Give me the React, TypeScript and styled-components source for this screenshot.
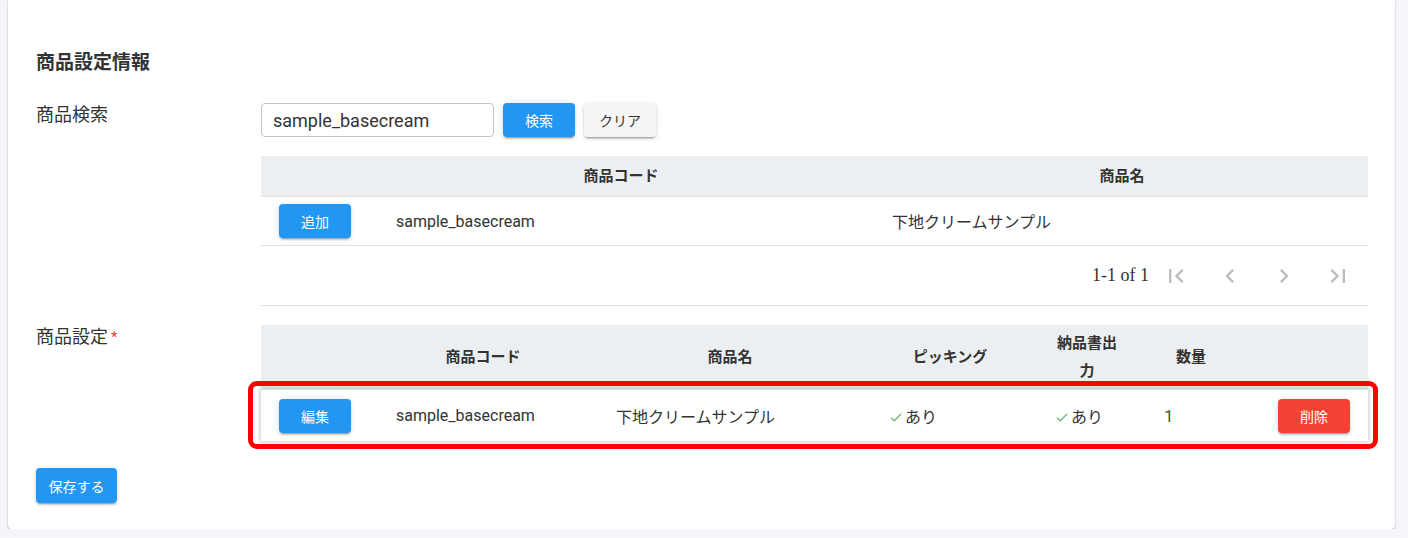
import React from 'react';
import styled, { createGlobalStyle } from 'styled-components';

const GlobalStyle = createGlobalStyle`
  *, *::before, *::after {
    box-sizing: border-box;
  }
  body {
    margin: 0;
    background: #f4f6f9;
    font-family: Roboto, "Noto Sans CJK JP", sans-serif;
    color: #333;
  }
`;

const Page = styled.div`
  padding: 0 13px 0 8px;
`;

const Card = styled.div`
  background: #fff;
  border-radius: 0 0 4px 4px;
  box-shadow: 0 1px 2px rgba(0, 0, 0, 0.28), 0 0 1px rgba(0, 0, 0, 0.12);
  padding: 50px 27px 26px 28px;
`;

const Title = styled.h2`
  margin: 0 0 27px;
  font-size: 19px;
  line-height: 26px;
  font-weight: 700;
  color: #333;
`;

const FieldRow = styled.div`
  display: flex;
  margin-bottom: 19px;
`;

const Label = styled.div`
  width: 225px;
  flex: none;
  font-size: 18px;
  line-height: 24px;
  color: #333;
`;

const Required = styled.span`
  color: #e53935;
  font-size: 15px;
  margin-left: 3px;
  vertical-align: top;
`;

const FieldBody = styled.div`
  flex: 1;
  display: flex;
  flex-direction: column;
  gap: 19px;
`;

const SearchBar = styled.div`
  display: flex;
  gap: 9px;
`;

const SearchInput = styled.input`
  width: 233px;
  height: 34px;
  border: 1px solid #c4c4c4;
  border-radius: 4px;
  padding: 0 11px;
  font-family: Roboto, "Noto Sans CJK JP", sans-serif;
  font-size: 18px;
  color: #333;
  outline: none;
`;

type Tone = 'primary' | 'error' | 'plain';

const toneBg: Record<Tone, string> = {
  primary: '#2196f3',
  error: '#f44336',
  plain: '#f5f5f5',
};

const Button = styled.button<{ $tone?: Tone }>`
  height: 34px;
  min-width: 72px;
  padding: 0 12px;
  border: none;
  border-radius: 4px;
  background: ${(p) => toneBg[p.$tone ?? 'primary']};
  color: ${(p) => (p.$tone === 'plain' ? '#333' : '#fff')};
  font-family: Roboto, "Noto Sans CJK JP", sans-serif;
  font-size: 14px;
  cursor: pointer;
  box-shadow: 0 3px 1px -2px rgba(0, 0, 0, 0.2), 0 2px 2px 0 rgba(0, 0, 0, 0.14),
    0 1px 5px 0 rgba(0, 0, 0, 0.12);
`;

const SaveButton = styled(Button)`
  height: 35px;
  min-width: 81px;
  margin-top: 8px;
`;

const Table = styled.div``;

const Grid = styled.div<{ $cols: string }>`
  display: grid;
  grid-template-columns: ${(p) => p.$cols};
  align-items: center;
`;

const HeadRow = styled(Grid)<{ $h: number }>`
  background: #eceff1;
  min-height: ${(p) => p.$h}px;
`;

const HeadCell = styled.div<{ $shift?: boolean }>`
  padding: ${(p) => (p.$shift ? '0 30px 0 16px' : '0 16px')};
  text-align: center;
  font-size: 15px;
  font-weight: 700;
  line-height: 28px;
  color: #333;
`;

const BodyRow = styled(Grid)<{ $h: number; $raised?: boolean }>`
  position: relative;
  height: ${(p) => p.$h}px;
  border-top: 1px solid #e0e0e0;
  background: #fff;
  box-shadow: ${(p) => (p.$raised ? '0 0 4px 1px rgba(0, 0, 0, 0.22)' : 'none')};
`;

const Cell = styled.div<{ $pl?: number; $align?: 'left' | 'right' }>`
  padding: 0 18px 0 ${(p) => p.$pl ?? 16}px;
  text-align: ${(p) => p.$align ?? 'left'};
  font-size: 16px;
  color: #333;
  white-space: nowrap;
`;

const Qty = styled.span`
  font-size: 17px;
  color: #33691e;
`;

const Highlight = styled.div`
  position: absolute;
  left: -13px;
  right: -10px;
  top: -9px;
  bottom: -8px;
  border: 5px solid #f00;
  border-radius: 9px;
  pointer-events: none;
`;

const Footer = styled.div`
  height: 61px;
  display: flex;
  align-items: center;
  justify-content: flex-end;
  padding-right: 3px;
  border-top: 1px solid #e0e0e0;
  border-bottom: 1px solid #e0e0e0;
`;

const PageInfo = styled.span`
  font-family: "Liberation Serif", serif;
  font-size: 18px;
  color: #333;
`;

const PageButton = styled.span`
  width: 36px;
  height: 36px;
  margin: 0 9px;
  display: inline-flex;
  align-items: center;
  justify-content: center;
  color: #bdbdbd;
`;

const Check = styled.svg`
  width: 12px;
  height: 9px;
  margin-right: 3px;
  vertical-align: 1px;
`;

const pagePaths = [
  'M18.41,16.59L13.82,12L18.41,7.41L17,6L11,12L17,18L18.41,16.59M6,6H8V18H6V6Z',
  'M15.41,16.58L10.83,12L15.41,7.41L14,6L8,12L14,18L15.41,16.58Z',
  'M8.59,16.58L13.17,12L8.59,7.41L10,6L16,12L10,18L8.59,16.58Z',
  'M5.59,7.41L10.18,12L5.59,16.59L7,18L13,12L7,6L5.59,7.41M16,6H18V18H16V6Z',
];

const CheckMark = () => (
  <Check viewBox="0 0 12 9">
    <path d="M1 4.6 L4.2 7.8 L11 1" fill="none" stroke="#66bb6a" strokeWidth="1.3" />
  </Check>
);

const Yes = () => (
  <>
    <CheckMark />
    あり
  </>
);

const searchCols = '119px 496px 1fr';
const settingCols = '119px 220px 274px 166px 108px 100px 1fr';

const App: React.FC = () => {
  return (
    <Page>
      <GlobalStyle />
      <Card>
        <Title>商品設定情報</Title>

        <FieldRow>
          <Label>商品検索</Label>
          <FieldBody>
            <SearchBar>
              <SearchInput defaultValue="sample_basecream" />
              <Button>検索</Button>
              <Button $tone="plain">クリア</Button>
            </SearchBar>
            <Table>
              <HeadRow $cols={searchCols} $h={40}>
                <HeadCell />
                <HeadCell $shift>商品コード</HeadCell>
                <HeadCell>商品名</HeadCell>
              </HeadRow>
              <BodyRow $cols={searchCols} $h={49}>
                <Cell $pl={18}>
                  <Button>追加</Button>
                </Cell>
                <Cell>sample_basecream</Cell>
                <Cell>下地クリームサンプル</Cell>
              </BodyRow>
              <Footer>
                <PageInfo>1-1 of 1</PageInfo>
                {pagePaths.map((d) => (
                  <PageButton key={d}>
                    <svg width="28" height="28" viewBox="0 0 24 24" fill="currentColor">
                      <path d={d} />
                    </svg>
                  </PageButton>
                ))}
              </Footer>
            </Table>
          </FieldBody>
        </FieldRow>

        <FieldRow>
          <Label>
            商品設定<Required>*</Required>
          </Label>
          <FieldBody>
            <Table>
              <HeadRow $cols={settingCols} $h={64}>
                <HeadCell />
                <HeadCell $shift>商品コード</HeadCell>
                <HeadCell $shift>商品名</HeadCell>
                <HeadCell $shift>ピッキング</HeadCell>
                <HeadCell $shift>納品書出力</HeadCell>
                <HeadCell $shift>数量</HeadCell>
                <HeadCell />
              </HeadRow>
              <BodyRow $cols={settingCols} $h={52} $raised>
                <Cell $pl={18}>
                  <Button>編集</Button>
                </Cell>
                <Cell>sample_basecream</Cell>
                <Cell>下地クリームサンプル</Cell>
                <Cell>
                  <Yes />
                </Cell>
                <Cell>
                  <Yes />
                </Cell>
                <Cell>
                  <Qty>1</Qty>
                </Cell>
                <Cell $align="right">
                  <Button $tone="error">削除</Button>
                </Cell>
                <Highlight />
              </BodyRow>
            </Table>
          </FieldBody>
        </FieldRow>

        <SaveButton>保存する</SaveButton>
      </Card>
    </Page>
  );
};

export default App;
